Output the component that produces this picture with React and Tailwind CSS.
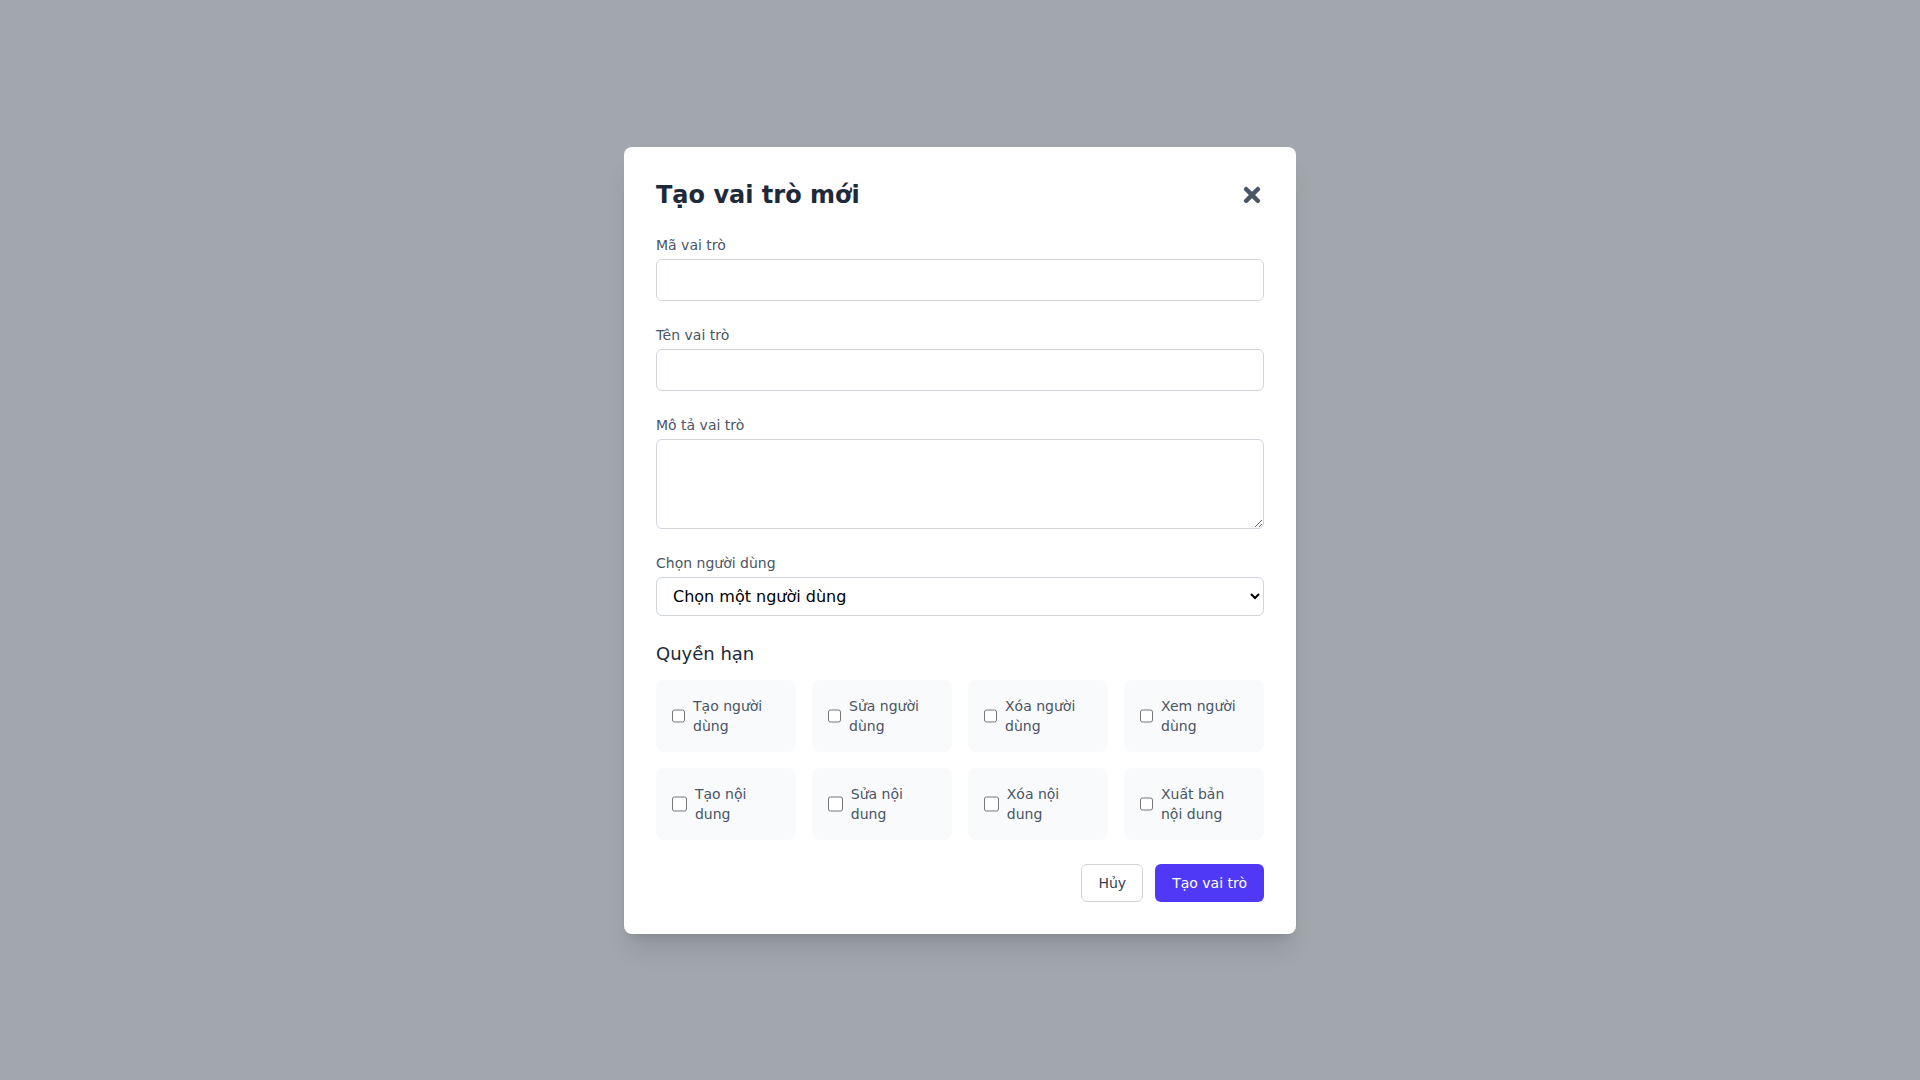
import { FaTimes } from 'react-icons/fa';

const permissions = [
    'Tạo người dùng',
    'Sửa người dùng',
    'Xóa người dùng',
    'Xem người dùng',
    'Tạo nội dung',
    'Sửa nội dung',
    'Xóa nội dung',
    'Xuất bản nội dung',
];

export default function App() {
    return (
        <div className="min-h-screen flex items-center justify-center bg-[#a2a6ae] font-['DejaVu_Sans',sans-serif]">
            <div className="w-full max-w-2xl bg-white rounded-lg shadow-xl p-8">
                <div className="flex items-center justify-between mb-6">
                    <h2 className="text-2xl font-bold text-gray-800">Tạo vai trò mới</h2>
                    <button type="button" className="py-1 text-gray-600 cursor-pointer">
                        <FaTimes size={24} />
                    </button>
                </div>

                <form>
                    <div className="mb-6">
                        <label className="block text-sm text-gray-600 mb-1">Mã vai trò</label>
                        <input type="text" className="w-full px-3 py-2 text-base border border-gray-300 rounded-md outline-none" />
                    </div>

                    <div className="mb-6">
                        <label className="block text-sm text-gray-600 mb-1">Tên vai trò</label>
                        <input type="text" className="w-full px-3 py-2 text-base border border-gray-300 rounded-md outline-none" />
                    </div>

                    <div className="mb-6">
                        <label className="block text-sm text-gray-600 mb-1">Mô tả vai trò</label>
                        <textarea rows={3} className="block w-full px-3 py-2 text-base border border-gray-300 rounded-md outline-none" />
                    </div>

                    <div className="mb-6">
                        <label className="block text-sm text-gray-600 mb-1">Chọn người dùng</label>
                        <select className="w-full px-3 py-2 text-base text-black bg-white border border-gray-300 rounded-md outline-none">
                            <option>Chọn một người dùng</option>
                        </select>
                    </div>

                    <h3 className="text-lg text-gray-800 mb-3">Quyền hạn</h3>
                    <div className="grid grid-cols-4 gap-4">
                        {permissions.map((p) => (
                            <label key={p} className="flex items-center p-4 bg-gray-50 rounded-lg">
                                <input type="checkbox" className="h-4 w-4" />
                                <span className="ml-2 text-sm text-gray-600">{p}</span>
                            </label>
                        ))}
                    </div>

                    <div className="flex justify-end gap-3 mt-6">
                        <button type="button" className="px-4 py-2 text-sm text-gray-700 border border-gray-300 rounded-md">
                            Hủy
                        </button>
                        <button type="submit" className="px-4 py-2 text-sm text-white bg-indigo-600 border border-transparent rounded-md">
                            Tạo vai trò
                        </button>
                    </div>
                </form>
            </div>
        </div>
    );
}
